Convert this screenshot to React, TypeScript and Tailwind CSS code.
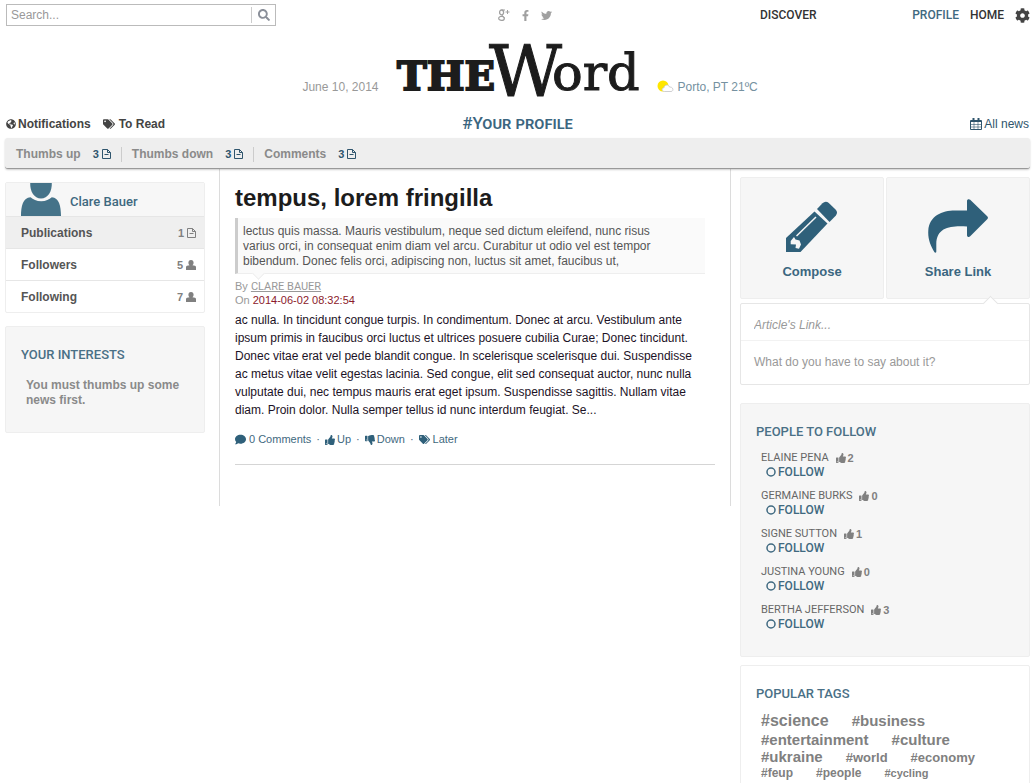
import type { ReactNode } from "react";
import { FaCog, FaComment, FaFacebookF, FaGlobeAmericas, FaSearch, FaTags, FaThumbsDown, FaThumbsUp, FaTwitter } from "react-icons/fa";

const people = [
  { name: "ELAINE PENA", likes: 2 },
  { name: "GERMAINE BURKS", likes: 0 },
  { name: "SIGNE SUTTON", likes: 1 },
  { name: "JUSTINA YOUNG", likes: 0 },
  { name: "BERTHA JEFFERSON", likes: 3 },
];

const tags = [
  { name: "science", size: "text-[16px] leading-[20px]" },
  { name: "business", size: "text-[15px] leading-[20px]" },
  { name: "entertainment", size: "text-[15px] leading-[18px]" },
  { name: "culture", size: "text-[15px] leading-[18px]" },
  { name: "ukraine", size: "text-[15px] leading-[16px]" },
  { name: "world", size: "text-[13px] leading-[16px]" },
  { name: "economy", size: "text-[13px] leading-[16px]" },
  { name: "feup", size: "text-[12px] leading-[15px]" },
  { name: "people", size: "text-[12px] leading-[15px]" },
  { name: "cycling", size: "text-[11px] leading-[15px]" },
];

function FileIcon() {
  return (
    <svg viewBox="0 0 9 10" className="h-[10px] w-[9px]" fill="none" stroke="currentColor">
      <path d="M.5.5h5l3 3v6h-8zM5.5.5v3h3M2.500 5.500h4" />
    </svg>
  );
}

function PersonIcon() {
  return (
    <svg viewBox="0 0 10 10" className="h-[10px] w-[10px]" fill="currentColor">
      <path d="M5 0c1.800 0 2.600 1.200 2.600 2.700 0 1.200-.5 2-1.100 2.500L9 5.700c.7.300 1 .8 1 1.600V10H0V7.300c0-.8.3-1.300 1-1.600l2.500-.5C2.900 4.700 2.400 3.900 2.400 2.700 2.400 1.200 3.200 0 5 0z" />
    </svg>
  );
}

function CalendarIcon() {
  return (
    <svg viewBox="0 0 12 12" className="h-[12px] w-[12px]" fill="none" stroke="currentColor">
      <path d="M.5 2.500h11v9H.5z" />
      <path d="M1 3h10" strokeWidth="2" />
      <path d="M3.500 0v3M8.500 0v3" strokeWidth="2" />
      <path d="M.5 6.500h11M.5 9h11M4 4v7.500M8 4v7.500" strokeWidth=".6" />
    </svg>
  );
}

function GooglePlusIcon() {
  return (
    <svg viewBox="0 0 12 12" className="h-[12px] w-[12px]" fill="none" stroke="currentColor">
      <ellipse cx="3.600" cy="3.400" rx="2" ry="2.400" strokeWidth="1.300" />
      <ellipse cx="3.500" cy="9.400" rx="2.800" ry="2" strokeWidth="1.200" />
      <path d="M3.600 1H7M5.200 5.200c-1.500 1-1 1.400 0 2.200.6.500 1 1 1.100 2" />
      <path d="M9.500 1v4M7.500 3h4" />
    </svg>
  );
}

function WeatherIcon() {
  return (
    <svg viewBox="0 0 18 15" className="h-[15px] w-[18px]">
      <circle cx="6" cy="6" r="5.500" fill="#ffe600" />
      <path d="M7.500 11.500C4.500 11.500 4.300 8 7 7.800 7.200 4.700 11.600 4 12.500 7c4-.3 4.500 4.300 1.500 4.500z" fill="#fff" stroke="#c9c9cc" strokeWidth=".9" />
    </svg>
  );
}

function Avatar() {
  return (
    <svg viewBox="0 0 40 33" className="h-[33px] w-[40px]" fill="#457389">
      <path d="M9.200 0h21.600c.3 8.500-4 15.500-10.800 15.500S8.900 8.500 9.200 0z" />
      <path d="M0 33c0-10 2-18.500 9.500-18.800 2.500 2.300 6 4 10.700 4s8-1.700 10.600-4C38 14.500 40 23 40 33z" />
    </svg>
  );
}

function PencilIcon() {
  return (
    <svg viewBox="0 0 52 52" className="h-[52px] w-[52px]" fill="#2f607a">
      <path d="M28.500 10.500 41.500 22.500 14.500 51H0V37z" />
      <path d="M31 8 36.500 2.200c2-2 4.300-2 6.300-.2L49.500 8.500c2 2 2 4 .2 6.200L43.500 21z" />
      <path d="M10.500 35 30 16" stroke="#f6f6f6" strokeWidth="1.500" />
      <path d="M4.700 40 8 36 9.500 38.500 13.500 39.500 15 43.500 13 47.700 9.500 47 10 43.500 4.700 43.300z" fill="#f6f6f6" />
    </svg>
  );
}

function ShareIcon() {
  return (
    <svg viewBox="0 0 60 54" className="h-[54px] w-[60px]" fill="#2f607a">
      <path d="M39 1.800C39 .2 41-.4 42.200.8L59.200 17.200c1 1 1 2 0 3L42.200 37.300C41 38.500 39 38 39 36.200V27.500C24 26.500 8.500 27.500 8.300 45v7.500c0 1.400-1.300 1.600-2 .4C2.500 46.500-.3 40 .3 31.500 1.300 17 14 11.500 27 11.500h12z" />
    </svg>
  );
}

function Logo() {
  return (
    <svg viewBox="0 0 242 78" className="h-[78px] w-[242px] overflow-visible" fill="#1c1c1c" stroke="#1c1c1c" role="img" aria-label="The Word" fontFamily="'DejaVu Serif', serif">
      <text x="0" y="60" fontSize="40" fontWeight="700" strokeWidth="2">THE</text>
      <text x="92" y="66" fontSize="71" strokeWidth="1">W</text>
      <text x="155" y="60" fontSize="51" strokeWidth="1">ord</text>
    </svg>
  );
}

function Panel({ children, className = "" }: { children: ReactNode; className?: string }) {
  return <section className={`rounded-[2px] border border-[#eeeeee] ${className}`}>{children}</section>;
}

function Heading({ children }: { children: ReactNode }) {
  return <h2 className="font-['Roboto',sans-serif] text-[13px] leading-[16px] font-medium text-[#4a7086]">{children}</h2>;
}

function Counter({ label, count }: { label: string; count: number }) {
  return (
    <li className="px-[10px]">
      <a href="#" className="flex items-center gap-[12px] text-[#8a8a8a]">
        {label}
        <span className="flex items-center gap-[3px] text-[11px] text-[#2f556d]">{count}<FileIcon /></span>
      </a>
    </li>
  );
}

function ProfileRow({ label, count, icon, className = "" }: { label: string; count: number; icon: ReactNode; className?: string }) {
  return (
    <li className={`border-t border-[#e6e6e6] ${className}`}>
      <a href="#" className="flex h-[31px] items-center justify-between pt-[1px] pr-[8px] pl-[15px] text-[12px] text-[#555555]">
        {label}
        <span className="flex items-center gap-[3px] text-[11px] text-[#808080]">{count}{icon}</span>
      </a>
    </li>
  );
}

export default function App() {
  return (
    <div className="min-h-screen bg-white px-[5px] font-['Liberation_Sans',Arial,sans-serif] text-[12px] leading-[15px] text-[#444444]">
      <header>
        <div className="flex h-[30px] items-center pl-[1px]">
          <form className="flex h-[22px] w-[270px] items-center border border-[#bbbbbb]">
            <input aria-label="Search" placeholder="Search..." className="min-w-0 flex-1 px-[4px] text-[12px] outline-none placeholder:text-[#999999]" />
            <button type="button" aria-label="Search" className="flex h-[16px] w-[24px] items-center justify-center border-l border-[#cccccc] text-[#8a8f99]">
              <FaSearch size={12} />
            </button>
          </form>
          <div className="flex flex-1 items-center justify-center gap-[10px] pl-[14px] text-[#a0a0a0]">
            <a href="#" aria-label="Google Plus"><GooglePlusIcon /></a>
            <a href="#" aria-label="Facebook"><FaFacebookF size={11} /></a>
            <a href="#" aria-label="Twitter"><FaTwitter size={11} /></a>
          </div>
          <nav className="flex w-[270px] items-center font-['Roboto',sans-serif] font-medium text-[#333333]">
            <a href="#" className="flex-1">DISCOVER</a>
            <a href="#" className="mr-[11px] text-[#3f6980]">PROFILE</a>
            <a href="#" className="mr-[11px]">HOME</a>
            <a href="#" aria-label="Settings" className="text-[#444444]"><FaCog size={15} /></a>
          </nav>
        </div>
        <div className="grid h-[78px] grid-cols-[1fr_auto_1fr] items-center text-[#999999]">
          <time className="pt-[36px] pr-[18px] text-right">June 10, 2014</time>
          <Logo />
          <p className="flex items-center gap-[3px] pt-[36px] pl-[18px] text-[#7591a0]"><WeatherIcon />Porto, PT 21ºC</p>
        </div>
        <div className="grid h-[30px] grid-cols-[1fr_auto_1fr] items-center">
          <nav className="flex items-center gap-[12px] pt-[2px] pl-[1px] font-bold">
            <a href="#" className="flex items-center gap-[2px]"><FaGlobeAmericas size={10} />Notifications</a>
            <a href="#" className="flex items-center gap-[4px]"><FaTags size={12} />To Read</a>
          </nav>
          <h1 className="font-['Roboto',sans-serif] text-[17px] leading-[20px] font-medium text-[#3b6680] [font-variant:small-caps]">#Your profile</h1>
          <a href="#" className="flex items-center gap-[2px] justify-self-end pt-[2px] pr-[1px] text-[#2f556d]"><CalendarIcon />All news</a>
        </div>
      </header>

      <nav className="relative h-[31px] rounded-[3px] border-b border-[#999999] bg-[#eeeeee] shadow-[0_1px_2px_rgba(0,0,0,0.2)]">
        <ul className="flex h-full items-center divide-x divide-[#cccccc] pt-[2px] pl-[1px] font-bold">
          <Counter label="Thumbs up" count={3} />
          <Counter label="Thumbs down" count={3} />
          <Counter label="Comments" count={3} />
        </ul>
      </nav>

      <div className="flex items-start">
        <aside className="mt-[13px] flex w-[200px] shrink-0 flex-col gap-[13px] font-bold">
          <Panel>
            <a href="#" className="flex h-[33px] items-end gap-[9px] bg-[#f7f7f7] pl-[15px] font-['Roboto',sans-serif] font-medium text-[#3f6980]">
              <Avatar /><span className="pb-[7px] text-[13px]">Clare Bauer</span>
            </a>
            <ul>
              <ProfileRow label="Publications" count={1} icon={<FileIcon />} className="bg-[#efefef]" />
              <ProfileRow label="Followers" count={5} icon={<PersonIcon />} />
              <ProfileRow label="Following" count={7} icon={<PersonIcon />} />
            </ul>
          </Panel>
          <Panel className="bg-[#f6f6f6] px-[15px] pt-[20px] pb-[24px]">
            <Heading>YOUR INTERESTS</Heading>
            <p className="px-[5px] pt-[15px] text-[#8a8a8a]">You must thumbs up some news first.</p>
          </Panel>
        </aside>

        <main className="mr-[9px] ml-[14px] h-[337px] min-w-0 flex-1 border-x border-[#dcdcdc] px-[15px]">
          <article className="border-b border-[#d5d5d5] pt-[14px] pb-[17px]">
            <h2 className="text-[24px] leading-[30px] font-bold text-[#1c1c1c]">tempus, lorem fringilla</h2>
            <blockquote className="relative mt-[5px] mr-[10px] border-b border-l-[3px] border-b-[#eeeeee] border-l-[#cccccc] bg-[#fafafa] pt-[6px] pr-[25px] pb-[4px] pl-[5px] text-[#555555]">
              lectus quis massa. Mauris vestibulum, neque sed dictum eleifend, nunc risus varius orci, in consequat enim diam vel arcu. Curabitur ut odio vel est tempor bibendum. Donec felis orci, adipiscing non, luctus sit amet, faucibus ut,
              <span className="absolute -bottom-[5px] left-[16px] size-[9px] rotate-45 border-r border-b border-[#eeeeee] bg-[#fafafa]" />
            </blockquote>
            <div className="pt-[5px] text-[11px] leading-[14px] text-[#999999]">
              <p className="h-[14px]">By <a href="#" className="font-['Roboto',sans-serif] underline">CLARE BAUER</a></p>
              <p>On <time className="text-[#8b1a2b]">2014-06-02 08:32:54</time></p>
            </div>
            <p className="pt-[4px] pr-[10px] leading-[18px] text-[#1c1226]">
              ac nulla. In tincidunt congue turpis. In condimentum. Donec at arcu. Vestibulum ante ipsum primis in faucibus orci luctus et ultrices posuere cubilia Curae; Donec tincidunt. Donec vitae erat vel pede blandit congue. In scelerisque scelerisque dui. Suspendisse ac metus vitae velit egestas lacinia. Sed congue, elit sed consequat auctor, nunc nulla vulputate dui, nec tempus mauris erat eget ipsum. Suspendisse sagittis. Nullam vitae diam. Proin dolor. Nulla semper tellus id nunc interdum feugiat. Se...
            </p>
            <div className="flex items-center gap-[5px] pt-[13px] text-[11px] text-[#3f6980]">
              <a href="#" className="flex items-center gap-[3px]"><FaComment size={11} color="#2f607a" />0 Comments</a>·
              <button type="button" className="flex items-center gap-[2px]"><FaThumbsUp size={10} color="#2f607a" />Up</button>·
              <button type="button" className="flex items-center gap-[2px]"><FaThumbsDown size={10} color="#2f607a" />Down</button>·
              <button type="button" className="flex items-center gap-[3px]"><FaTags size={11} color="#2f607a" />Later</button>
            </div>
          </article>
        </main>

        <aside className="mt-[8px] w-[290px] shrink-0">
          <div className="grid grid-cols-2 gap-[2px] text-[13px] font-bold text-[#3b6680]">
            <button type="button" className="flex h-[122px] flex-col items-center rounded-[2px] border border-[#eeeeee] bg-[#f6f6f6] pt-[23px]">
              <PencilIcon /><span className="pt-[11px]">Compose</span>
            </button>
            <button type="button" className="flex h-[122px] flex-col items-center rounded-[2px] border border-[#eeeeee] bg-[#f6f6f6] pt-[21px]">
              <ShareIcon /><span className="pt-[11px]">Share Link</span>
            </button>
          </div>
          <form className="relative mt-[4px] h-[82px] rounded-[2px] border border-[#e6e6e6] bg-white">
            <span className="absolute -top-[6px] right-[33px] size-[11px] rotate-45 border-t border-l border-[#e6e6e6] bg-white" />
            <input aria-label="Article's link" placeholder="Article's Link..." className="relative block h-[37px] w-full border-b border-[#f2f2f2] px-[13px] pt-[5px] italic outline-none placeholder:text-[#999999]" />
            <textarea aria-label="Comment" placeholder="What do you have to say about it?" className="block h-[40px] w-full resize-none px-[13px] pt-[14px] outline-none placeholder:text-[#999999]" />
          </form>
          <Panel className="mt-[18px] bg-[#f6f6f6] px-[15px] pt-[20px] pb-[25px]">
            <Heading>PEOPLE TO FOLLOW</Heading>
            <ul className="flex flex-col gap-[10px] px-[5px] pt-[11px] text-[11px] leading-[14px]">
              {people.map((person) => (
                <li key={person.name} className="text-[#666666]">
                  <div className="flex items-center gap-[7px] font-['Roboto',sans-serif]">
                    {person.name}
                    <span className="flex items-center gap-[2px] font-['Liberation_Sans',Arial,sans-serif] font-bold text-[#808080]"><FaThumbsUp size={10} />{person.likes}</span>
                  </div>
                  <button type="button" className="flex items-center gap-[2px] pl-[5px] font-['Roboto',sans-serif] text-[12px] leading-[14px] font-medium text-[#3f6980]">
                    <svg viewBox="0 0 10 10" className="size-[10px]" fill="none" stroke="currentColor" strokeWidth="1.500"><circle cx="5" cy="5" r="4" /></svg>
                    FOLLOW
                  </button>
                </li>
              ))}
            </ul>
          </Panel>
          <Panel className="mt-[8px] px-[15px] pt-[20px] pb-[20px]">
            <Heading>POPULAR TAGS</Heading>
            <ul className="flex flex-wrap items-baseline gap-x-[23px] px-[5px] pt-[9px] font-bold text-[#808080]">
              {tags.map((tag) => (
                <li key={tag.name} className={tag.size}><a href="#">#{tag.name}</a></li>
              ))}
            </ul>
          </Panel>
        </aside>
      </div>
    </div>
  );
}
